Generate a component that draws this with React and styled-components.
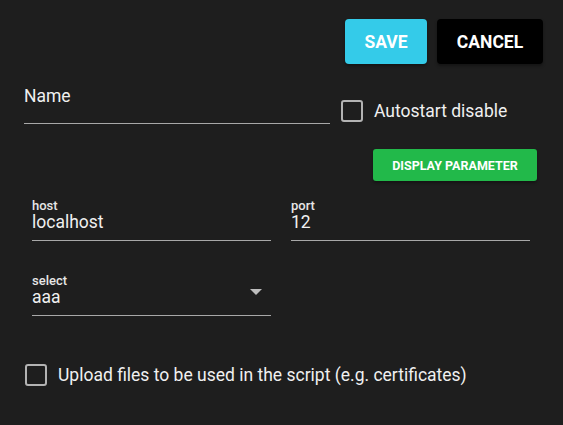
import styled, { createGlobalStyle } from 'styled-components';

const Global = createGlobalStyle`
  html, body {
    margin: 0;
    padding: 0;
    background: #1e1e1e;
  }
  body {
    font-family: Roboto, "Liberation Sans", sans-serif;
    color: #eeeeee;
  }
`;

const Page = styled.div`
  width: 563px;
  height: 425px;
  box-sizing: border-box;
  background: #1e1e1e;
  padding: 19px 20px 0 24px;
  display: flex;
  flex-direction: column;
`;

const Toolbar = styled.div`
  display: flex;
  justify-content: flex-end;
  gap: 10px;
`;

const ActionButton = styled.button`
  height: 45px;
  min-width: ${p => p.$w}px;
  padding: 0 18px;
  border: none;
  border-radius: 4px;
  background: ${p => p.$bg};
  color: #ffffff;
  font-family: Roboto, sans-serif;
  font-size: 17.5px;
  font-weight: 700;
  letter-spacing: 0;
  text-transform: uppercase;
  box-shadow: 0 2px 3px rgba(0, 0, 0, 0.35);
`;

const NameRow = styled.div`
  display: flex;
  align-items: flex-start;
  margin-top: 21px;
`;

const NameField = styled.div`
  width: 306px;
  height: 39px;
  box-sizing: border-box;
  border-bottom: 1px solid #a8a8a8;
  font-size: 17.5px;
  padding-top: 1px;
  color: #f0f0f0;
`;

const CheckRow = styled.label`
  display: flex;
  align-items: center;
  gap: 11px;
  font-size: 17.5px;
  color: #f0f0f0;
  margin-left: ${p => p.$ml || 0}px;
  margin-top: ${p => p.$mt || 0}px;
`;

const Box = styled.span`
  width: 22px;
  height: 22px;
  box-sizing: border-box;
  border: 2px solid #b3b3b3;
  border-radius: 3px;
  flex: none;
`;

const ParamRow = styled.div`
  display: flex;
  justify-content: flex-end;
  padding-right: 6px;
  margin-top: 25px;
`;

const ParamButton = styled.button`
  width: 164px;
  height: 32px;
  border: none;
  border-radius: 3px;
  background: #22b94a;
  color: #ffffff;
  font-family: Roboto, sans-serif;
  font-size: 12.5px;
  font-weight: 700;
  text-transform: uppercase;
  box-shadow: 0 2px 3px rgba(0, 0, 0, 0.35);
`;

const Grid = styled.div`
  display: grid;
  grid-template-columns: 239px 239px;
  column-gap: 20px;
  row-gap: 32px;
  padding-left: 8px;
  margin-top: 17px;
`;

const Field = styled.div`
  position: relative;
  height: 43px;
  box-sizing: border-box;
  border-bottom: 1px solid #a8a8a8;
  display: flex;
  flex-direction: column;
`;

const Label = styled.span`
  font-size: 13px;
  font-weight: 500;
  color: #e6e6e6;
  line-height: 15px;
`;

const Value = styled.span`
  font-size: 17.5px;
  color: #f0f0f0;
  line-height: 21px;
  margin-top: -1px;
`;

const Arrow = styled.span`
  position: absolute;
  right: 9px;
  top: 16px;
  width: 0;
  height: 0;
  border-left: 6px solid transparent;
  border-right: 6px solid transparent;
  border-top: 6px solid #bdbdbd;
`;

export default function App() {
  return (
    <>
      <Global />
      <Page>
        <Toolbar>
          <ActionButton $bg="#34cbe9" $w={82}>Save</ActionButton>
          <ActionButton $bg="#000000" $w={106}>Cancel</ActionButton>
        </Toolbar>
        <NameRow>
          <NameField>Name</NameField>
          <CheckRow $ml={11} $mt={15}>
            <Box />
            Autostart disable
          </CheckRow>
        </NameRow>
        <ParamRow>
          <ParamButton>Display parameter</ParamButton>
        </ParamRow>
        <Grid>
          <Field>
            <Label>host</Label>
            <Value>localhost</Value>
          </Field>
          <Field>
            <Label>port</Label>
            <Value>12</Value>
          </Field>
          <Field>
            <Label>select</Label>
            <Value>aaa</Value>
            <Arrow />
          </Field>
        </Grid>
        <CheckRow $ml={1} $mt={48}>
          <Box />
          Upload files to be used in the script (e.g. certificates)
        </CheckRow>
      </Page>
    </>
  );
}
